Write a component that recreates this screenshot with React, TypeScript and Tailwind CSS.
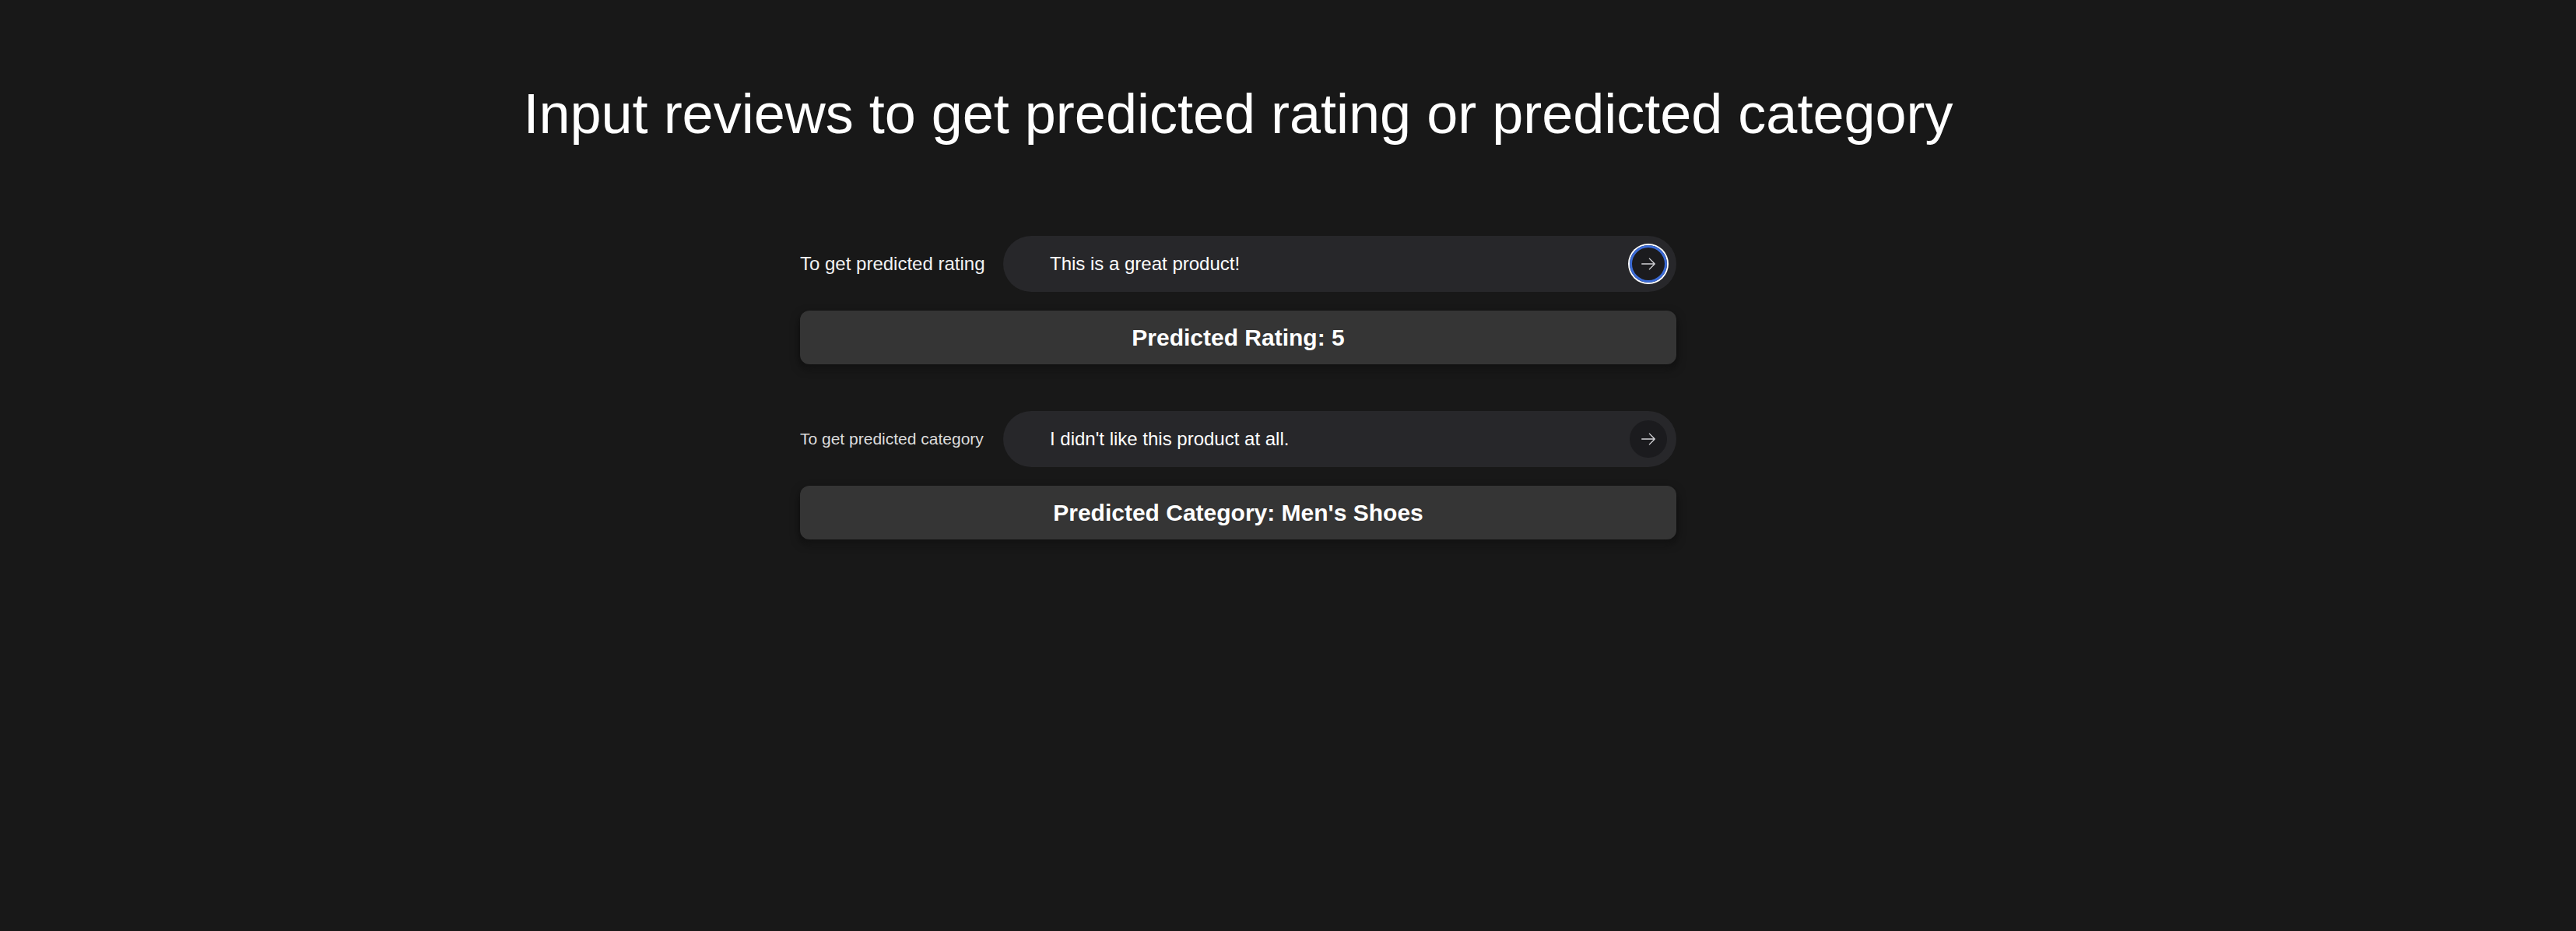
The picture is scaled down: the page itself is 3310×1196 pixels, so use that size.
import { useState } from "react"

function ArrowIcon() {
  return (
    <svg
      width="22"
      height="22"
      viewBox="0 0 24 24"
      fill="none"
      stroke="#d4d4d8"
      strokeWidth="1.5"
      strokeLinecap="round"
      strokeLinejoin="round"
    >
      <path d="M13.5 4.5 21 12m0 0-7.5 7.5M21 12H3" />
    </svg>
  )
}

type RowProps = {
  label: string
  labelClass: string
  value: string
  focused?: boolean
  result: string
}

function PredictRow({ label, labelClass, value, focused, result }: RowProps) {
  const [text, setText] = useState(value)

  return (
    <div className="flex flex-col gap-6">
      <div className="flex items-center gap-6">
        <span className={`w-[237px] shrink-0 whitespace-nowrap ${labelClass}`}>{label}</span>
        <div className="flex h-[72px] flex-1 items-center rounded-full bg-[#27272a] pl-[60px] pr-3">
          <input
            value={text}
            onChange={(e) => setText(e.target.value)}
            className="flex-1 bg-transparent text-[24px] text-white outline-none"
          />
          <button
            className={`flex h-12 w-12 shrink-0 items-center justify-center rounded-full bg-[#1b1b1e] ${
              focused ? "shadow-[inset_0_0_0_3px_#3b6bd6,0_0_0_2px_#ffffff]" : ""
            }`}
          >
            <ArrowIcon />
          </button>
        </div>
      </div>

      {/* result card */}
      <div className="flex h-[69px] items-center justify-center rounded-xl bg-[#353535] shadow-[0_5px_12px_rgba(0,0,0,0.55),0_10px_12px_-6px_rgba(255,255,255,0.05)]">
        <span className="text-[30px] font-bold text-white">{result}</span>
      </div>
    </div>
  )
}

export default function App() {
  return (
    <div className="min-h-screen bg-[#181818] pr-[128px] font-['Liberation_Sans',Arial,sans-serif]">
      <h1 className="pt-[110px] text-center text-[72px] leading-none font-normal text-white">
        Input reviews to get predicted rating or predicted category
      </h1>

      <div className="mx-auto mt-[121px] flex w-[1126px] flex-col gap-[60px]">
        <PredictRow
          label="To get predicted rating"
          labelClass="text-[24px] text-[#f2f2f2]"
          value="This is a great product!"
          focused
          result="Predicted Rating: 5"
        />
        <PredictRow
          label="To get predicted category"
          labelClass="text-[21px] text-[#dcdcdc]"
          value="I didn't like this product at all."
          result="Predicted Category: Men's Shoes"
        />
      </div>
    </div>
  )
}
